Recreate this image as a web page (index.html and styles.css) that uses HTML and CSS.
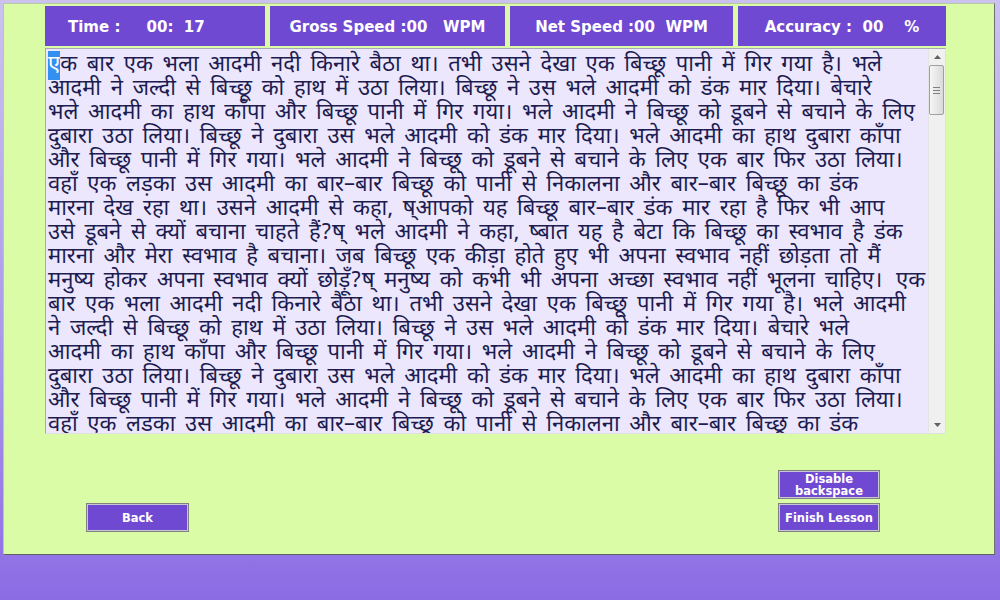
FILE: index.html
```html
<!DOCTYPE html>
<html lang="hi">
<head>
    <meta charset="UTF-8">
    <meta name="viewport" content="width=device-width, initial-scale=1.0">
    <title>Typing Lesson</title>
    <link rel="stylesheet" href="styles.css">
</head>
<body>
    <div class="panel">
        <div class="stats">
            <div class="stat stat-time">Time :     00:  17</div>
            <div class="stat stat-gross">Gross Speed :00   WPM</div>
            <div class="stat stat-net">Net Speed :00  WPM</div>
            <div class="stat stat-acc">Accuracy :  00    %</div>
        </div>
        <div class="lesson">
            <div class="lesson-text"><span class="cursor">ए</span>क बार एक भला आदमी नदी किनारे बैठा था। तभी उसने देखा एक बिच्छू पानी में गिर गया है। भले<br>
आदमी ने जल्दी से बिच्छू को हाथ में उठा लिया। बिच्छू ने उस भले आदमी को डंक मार दिया। बेचारे<br>
भले आदमी का हाथ काँपा और बिच्छू पानी में गिर गया। भले आदमी ने बिच्छू को डूबने से बचाने के लिए<br>
दुबारा उठा लिया। बिच्छू ने दुबारा उस भले आदमी को डंक मार दिया। भले आदमी का हाथ दुबारा काँपा<br>
और बिच्छू पानी में गिर गया। भले आदमी ने बिच्छू को डूबने से बचाने के लिए एक बार फिर उठा लिया।<br>
वहाँ एक लड़का उस आदमी का बार–बार बिच्छू को पानी से निकालना और बार–बार बिच्छू का डंक<br>
मारना देख रहा था। उसने आदमी से कहा, ष्आपको यह बिच्छू बार–बार डंक मार रहा है फिर भी आप<br>
उसे डूबने से क्यों बचाना चाहते हैं?ष् भले आदमी ने कहा, ष्बात यह है बेटा कि बिच्छू का स्वभाव है डंक<br>
मारना और मेरा स्वभाव है बचाना। जब बिच्छू एक कीड़ा होते हुए भी अपना स्वभाव नहीं छोड़ता तो मैं<br>
मनुष्य होकर अपना स्वभाव क्यों छोड़ूँ?ष् मनुष्य को कभी भी अपना अच्छा स्वभाव नहीं भूलना चाहिए। <span class="tight">एक</span><br>
बार एक भला आदमी नदी किनारे बैठा था। तभी उसने देखा एक बिच्छू पानी में गिर गया है। भले आदमी<br>
ने जल्दी से बिच्छू को हाथ में उठा लिया। बिच्छू ने उस भले आदमी को डंक मार दिया। बेचारे भले<br>
आदमी का हाथ काँपा और बिच्छू पानी में गिर गया। भले आदमी ने बिच्छू को डूबने से बचाने के लिए<br>
दुबारा उठा लिया। बिच्छू ने दुबारा उस भले आदमी को डंक मार दिया। भले आदमी का हाथ दुबारा काँपा<br>
और बिच्छू पानी में गिर गया। भले आदमी ने बिच्छू को डूबने से बचाने के लिए एक बार फिर उठा लिया।<br>
वहाँ एक लड़का उस आदमी का बार–बार बिच्छू को पानी से निकालना और बार–बार बिच्छू का डंक</div>
            <div class="scrollbar">
                <div class="scroll-arrow">
                    <svg width="7" height="4" viewBox="0 0 7 4"><path d="M0 4 L3.5 0 L7 4 Z" fill="#606060"/></svg>
                </div>
                <div class="scroll-track">
                    <div class="scroll-thumb">
                        <span></span><span></span><span></span>
                    </div>
                </div>
                <div class="scroll-arrow">
                    <svg width="7" height="4" viewBox="0 0 7 4"><path d="M0 0 L3.5 4 L7 0 Z" fill="#606060"/></svg>
                </div>
            </div>
        </div>
        <div class="actions">
            <button class="btn btn-back">Back</button>
            <div class="action-group">
                <button class="btn">Disable<br>backspace</button>
                <button class="btn">Finish Lesson</button>
            </div>
        </div>
    </div>
</body>
</html>
```

FILE: styles.css
```css
* {
    box-sizing: border-box;
}
body {
    margin: 0;
    height: 600px;
    overflow: hidden;
    background: linear-gradient(to bottom, #cbc3ee 0%, #a996ea 60%, #8c6ce4 100%);
    font-family: "DejaVu Sans", Verdana, sans-serif;
}
.panel {
    margin: 3px 5px 0 3px;
    height: 552px;
    background-color: #dafca6;
    border: 1px solid #b8c8a0;
    border-right-color: #707070;
    border-bottom-color: #606060;
    padding: 2px 0 0 41px;
}
.stats {
    display: flex;
    gap: 5px;
    width: 901px;
}
.stat {
    height: 40px;
    display: flex;
    align-items: center;
    justify-content: center;
    background-color: #7049d3;
    color: #fff;
    font-weight: bold;
    font-size: 15px;
    white-space: pre;
    padding-top: 1px;
}
.stat-time {
    width: 220px;
    justify-content: flex-start;
    padding-left: 23px;
}
.stat-gross {
    width: 235px;
}
.stat-net {
    width: 223px;
}
.stat-acc {
    width: 208px;
}
.lesson {
    display: flex;
    margin-top: 2px;
    width: 901px;
    height: 386px;
    background-color: #ece7fc;
    border: 1px solid #a8a8b8;
    border-right-color: #e0e0e0;
    border-bottom-color: #e0e0e0;
}
.lesson-text {
    flex: 1;
    overflow: hidden;
    white-space: nowrap;
    padding: 5px 2px 0;
    color: #1c1c50;
    font-family: "Noto Sans Devanagari", "Lohit Devanagari", "Noto Serif Devanagari", "Mangal", "Noto Sans", sans-serif;
    font-size: 22px;
    line-height: 24px;
    word-spacing: 4px;
}
.tight {
    margin-left: 4px;
}
.cursor {
    background-color: #3390f0;
    color: #fff;
}
.scrollbar {
    width: 17px;
    display: flex;
    flex-direction: column;
    background-color: #f0f0f0;
    border-left: 1px solid #e4e4e4;
}
.scroll-arrow {
    height: 16px;
    display: flex;
    align-items: center;
    justify-content: center;
}
.scroll-track {
    flex: 1;
}
.scroll-thumb {
    width: 15px;
    height: 50px;
    background: linear-gradient(to right, #f6f6f6, #dadada);
    border: 1px solid #a0a0a0;
    border-radius: 2px;
    display: flex;
    flex-direction: column;
    align-items: center;
    justify-content: center;
    gap: 2px;
}
.scroll-thumb span {
    width: 7px;
    height: 1px;
    background-color: #808080;
}
.actions {
    display: flex;
    align-items: flex-end;
    width: 901px;
    margin-top: 36px;
}
.action-group {
    display: flex;
    flex-direction: column;
    gap: 4px;
    margin-left: auto;
    margin-right: 66px;
}
.btn {
    width: 103px;
    height: 29px;
    padding: 0;
    background-color: #7049d3;
    color: #fff;
    font-family: "DejaVu Sans", Verdana, sans-serif;
    font-weight: bold;
    font-size: 11.5px;
    line-height: 12px;
    border: 2px solid #c8c8d0;
    outline: 1px solid #808080;
    outline-offset: -1px;
    cursor: pointer;
}
.btn-back {
    margin-left: 41px;
}
.action-group .btn {
    width: 102px;
}
```
